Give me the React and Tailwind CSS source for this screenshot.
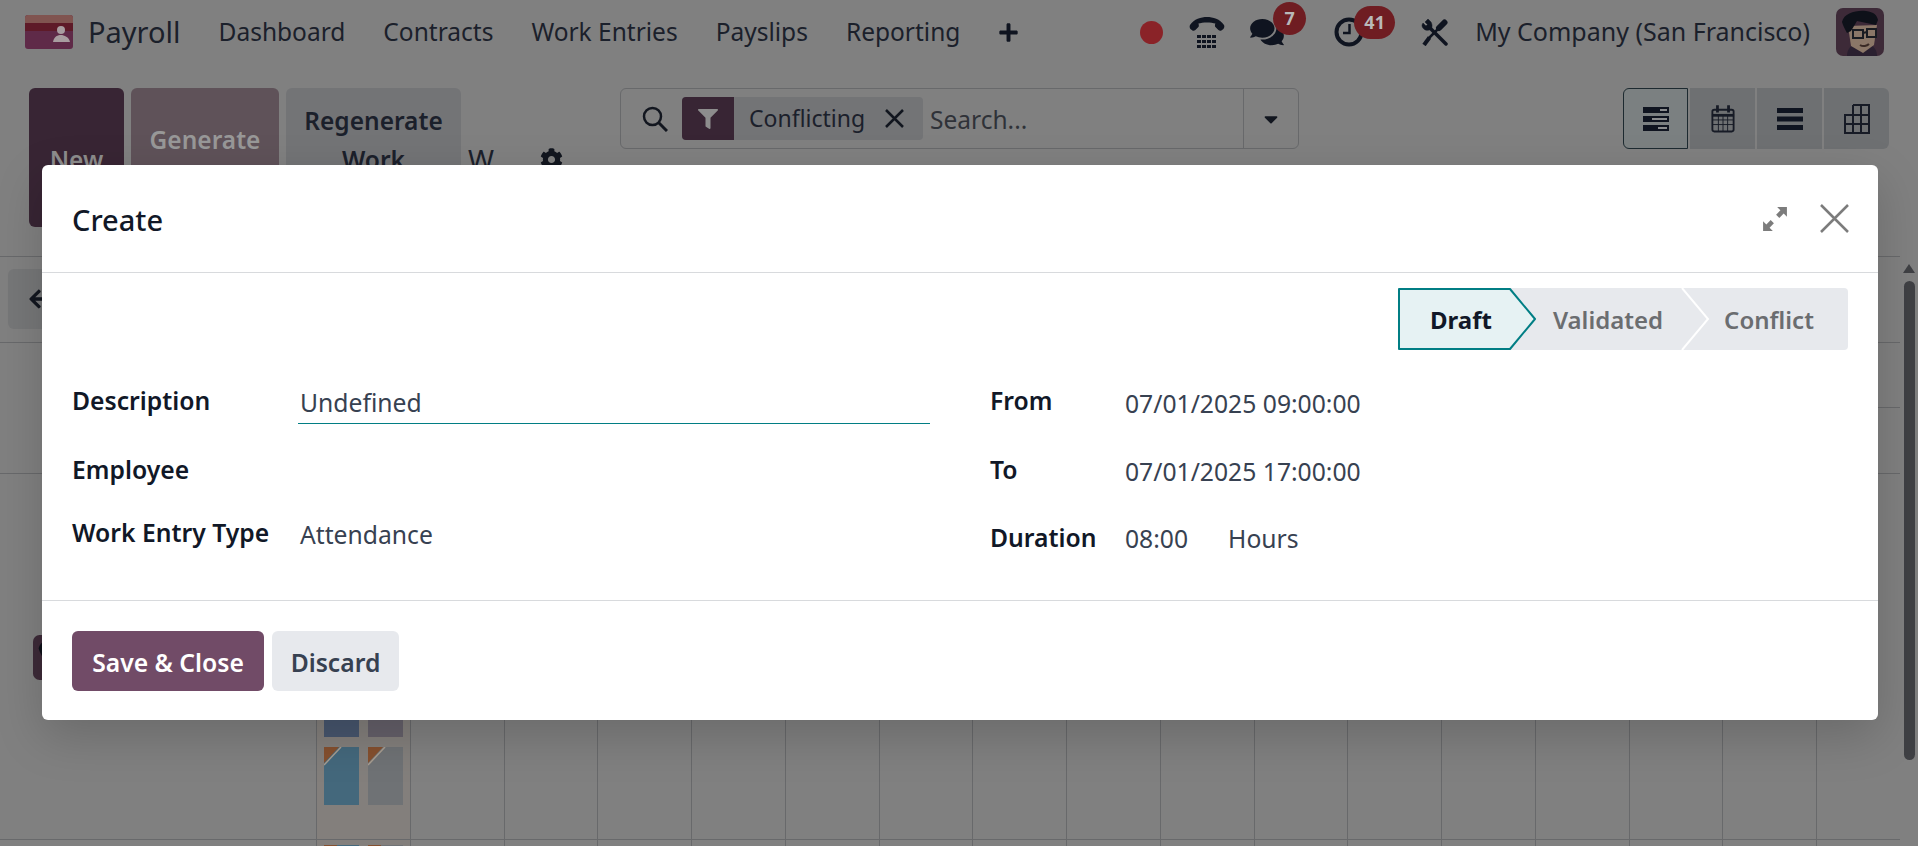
import { FaComments, FaFilter, FaCog, FaArrowLeft, FaCaretDown, FaPlus } from 'react-icons/fa';

const font = { fontFamily: '"Noto Sans", sans-serif' };

function PayrollLogo() {
  return (
    <svg width="48" height="34" viewBox="0 0 48 34" className="shrink-0">
      <rect width="48" height="34" rx="3" fill="#5f2a48" />
      <path d="M0 3a3 3 0 0 1 3-3h42a3 3 0 0 1 3 3v6H0z" fill="#805450" />
      <rect y="8" width="48" height="8" fill="#5e1a28" />
      <circle cx="36" cy="15" r="4" fill="#a89da0" />
      <path d="M28 27c1-6 5-7 8-7s8 2 9 7z" fill="#a89da0" />
    </svg>
  );
}

function Avatar({ size = 48 }) {
  return (
    <svg width={size} height={size} viewBox="0 0 48 48">
      <rect width="48" height="48" rx="7" fill="#3d2a38" />
      <path d="M11 48c0-6 3-10 7-11h16c5 2 7 6 7 11z" fill="#2a2030" />
      <path d="M12 18l3 20 12 7 11-8 3-20z" fill="#8b7768" />
      <path d="M6 14C8 5 20 2 30 3c8 1 11 4 12 9l-2 5-19-4-6 10-4 2C9 21 7 18 6 14z" fill="#0e1119" />
      <rect x="17" y="22" width="10" height="8" fill="none" stroke="#1a1c22" strokeWidth="2" />
      <rect x="31" y="21" width="9" height="8" fill="none" stroke="#1a1c22" strokeWidth="2" />
      <path d="M27 25l4-1" stroke="#1a1c22" strokeWidth="2" />
      <path d="M24 37c3 2 7 1 9-1" stroke="#3a2a25" strokeWidth="2" fill="none" />
    </svg>
  );
}

function VoipIcon() {
  return (
    <svg width="36" height="31" viewBox="0 0 36 31" fill="#0f1420">
      <path d="M1 8C5 2 12 0 18 0s13 2 17 8c.6 1 .4 3-.6 4l-2 1.500c-1 .6-2 .4-3-.4l-3-3c-.6-.6-.6-2 0-3.500-4-1.600-13-1.600-17 0 .6 1.500.6 2.900 0 3.500l-3 3c-1 .8-2 1-3 .4l-2-1.500C.6 11 .4 9 1 8z" />
      {[18, 23, 28].map((y) =>
        [8, 13, 18, 23].map((x) => <rect key={`${x}-${y}`} x={x} y={y} width="4" height="3" />)
      )}
    </svg>
  );
}

function ClockIcon() {
  return (
    <svg width="30" height="30" viewBox="0 0 30 30" fill="none" stroke="#0f1420">
      <circle cx="15" cy="15" r="12.500" strokeWidth="4" />
      <path d="M15.500 7v9H9" strokeWidth="2.500" />
    </svg>
  );
}

function ToolsIcon() {
  return (
    <svg width="27" height="27" viewBox="0 0 27 27" fill="none" stroke="#0f1420">
      <path d="M8 8l17 17" strokeWidth="3.500" strokeLinecap="round" />
      <path d="M1 6c0 4 4 6 7 5s4-4 2-8L7 0 4 3l2.500 2.500L5 7 2 4z" fill="#0f1420" strokeWidth="0.500" />
      <path d="M23.500 3.500L18 9" strokeWidth="6" strokeLinecap="round" />
      <path d="M18 9L8 19" strokeWidth="2.500" />
      <path d="M8.500 18.500L3 26" strokeWidth="4" />
    </svg>
  );
}

function SearchIcon() {
  return (
    <svg width="26" height="26" viewBox="0 0 26 26" fill="none" stroke="#12161f" strokeWidth="2.500">
      <circle cx="10.500" cy="10.500" r="8.500" />
      <path d="M17 17l8 8" strokeWidth="3" />
    </svg>
  );
}

function GanttView() {
  return (
    <svg width="28" height="24" viewBox="0 0 28 24" fill="#0f1420">
      <path d="M1 0h26v6H1zM1 9h26v6H1zM1 18h26v6H1z" />
      <path d="M18 2h7v2h-7zM10 11h15v2H10zM16 20h9v2h-9z" fill="#8a8c8e" />
    </svg>
  );
}

function CalendarView() {
  return (
    <svg width="24" height="30" viewBox="0 0 26 30" fill="none" stroke="#171b26">
      <rect x="1.500" y="5" width="23" height="23.500" rx="2" strokeWidth="2" />
      <path d="M1 11h24" strokeWidth="3" />
      <path d="M7 0v8M19 0v8" strokeWidth="3" />
      <path d="M1.500 16h23M1.500 21h23M8 11v17M13 11v17M18 11v17" strokeWidth="1" />
    </svg>
  );
}

function ListView() {
  return (
    <svg width="26" height="24" viewBox="0 0 26 24" fill="#0f1420">
      <path d="M0 1h26v5H0zM0 9.500h26v5H0zM0 18h26v5H0z" />
    </svg>
  );
}

function PivotView() {
  return (
    <svg width="26" height="30" viewBox="0 0 26 30" fill="none" stroke="#171b26" strokeWidth="2">
      <path d="M9 1h16v28H1V11h24M9 1v28M17 1v28M1 20h24" />
    </svg>
  );
}

function GanttPill({ color, flagged }) {
  return (
    <div className="relative h-full w-[38px] overflow-hidden" style={{ background: color }}>
      {flagged && (
        <svg width="20" height="20" viewBox="0 0 20 20" className="absolute left-0 top-0">
          <polygon points="0,0 15,0 0,16" fill="#85502f" />
          <path d="M17 0L0 18" stroke="#a89d90" strokeWidth="1.500" />
        </svg>
      )}
    </div>
  );
}

function Navbar() {
  const menus = ['Dashboard', 'Contracts', 'Work Entries', 'Payslips', 'Reporting'];
  return (
    <header className="flex h-[64px] items-center text-[#1b202b]">
      <div className="ml-[25px] flex items-center">
        <PayrollLogo />
        <span className="ml-[15px] text-[29px]">Payroll</span>
      </div>
      <nav className="ml-[38px] flex items-center gap-[38px] text-[24.500px]">
        {menus.map((m) => (
          <span key={m}>{m}</span>
        ))}
      </nav>
      <FaPlus className="ml-[38px] h-[21px] w-[21px] text-[#0f1420]" />
      <div className="ml-auto flex items-center">
        <span className="h-[23px] w-[23px] rounded-full bg-[#8a2328]" />
        <span className="ml-[26px]"><VoipIcon /></span>
        <span className="relative ml-[25px]">
          <FaComments className="h-[30px] w-[34px] text-[#0f1420]" />
          <span className="absolute -right-[22px] -top-[15px] flex h-[33px] w-[33px] items-center justify-center rounded-full bg-[#6f1d22] text-[18px] font-bold text-[#b9b9b9]">7</span>
        </span>
        <span className="relative ml-[50px]">
          <ClockIcon />
          <span className="absolute -right-[31px] -top-[11px] flex h-[33px] w-[41px] items-center justify-center rounded-full bg-[#6f1d22] text-[18px] font-bold text-[#b9b9b9]">41</span>
        </span>
        <span className="ml-[57px]"><ToolsIcon /></span>
        <span className="ml-[27px] text-[25px]">My Company (San Francisco)</span>
        <span className="ml-[26px] mr-[16px]"><Avatar /></span>
      </div>
    </header>
  );
}

function ControlPanel() {
  return (
    <section className="flex h-[193px] items-start border-b border-[#68696b] pt-[24px] text-[#1b202b]">
      <div className="ml-[29px] flex items-start gap-[7px] text-[24.500px] font-semibold">
        <button className="flex h-[139px] w-[95px] items-start justify-center rounded-[6px] bg-[#382534] pt-[54px] text-[#8d8d8d]">New</button>
        <button className="flex h-[139px] w-[148px] items-start justify-center rounded-[6px] bg-[#5f5259] pt-[34px] text-[#989898]">Generate</button>
        <button className="flex h-[139px] w-[175px] items-start justify-center rounded-[6px] bg-[#737476] pt-[13px] leading-[39px]">Regenerate<br />Work</button>
      </div>
      <span className="ml-[7px] mt-[51px] text-[28px] leading-[40px]">W</span>
      <FaCog className="ml-[46px] mt-[60px] h-[23px] w-[23px] text-[#12161f]" />
      <div className="ml-[57px] flex h-[61px] w-[679px] items-center rounded-[6px] border border-[#68696b]">
        <span className="ml-[21px]"><SearchIcon /></span>
        <div className="ml-[14px] flex h-[43px] w-[241px] items-center rounded-[4px] bg-[#737476]">
          <span className="flex h-full w-[52px] items-center justify-center rounded-l-[4px] bg-[#382534]">
            <FaFilter className="h-[20px] w-[20px] text-[#8d8d8d]" />
          </span>
          <span className="ml-[15px] text-[23px]">Conflicting</span>
          <svg width="19" height="19" viewBox="0 0 19 19" stroke="#12161f" strokeWidth="2.500" className="ml-[20px]">
            <path d="M1 1l17 17M18 1L1 18" />
          </svg>
        </div>
        <span className="ml-[7px] mt-[3px] text-[24.500px] text-[#2f3238]">Search...</span>
        <div className="ml-auto flex h-full w-[55px] items-center justify-center border-l border-[#68696b]">
          <FaCaretDown className="h-[22px] w-[22px] text-[#12161f]" />
        </div>
      </div>
      <div className="ml-[324px] flex h-[61px] gap-[2px]">
        <span className="flex w-[65px] items-center justify-center rounded-l-[6px] border border-[#1d2a30] bg-[#7b8081]"><GanttView /></span>
        <span className="flex w-[65px] items-center justify-center bg-[#6e7072]"><CalendarView /></span>
        <span className="flex w-[65px] items-center justify-center bg-[#6e7072]"><ListView /></span>
        <span className="flex w-[65px] items-center justify-center rounded-r-[6px] bg-[#6e7072]"><PivotView /></span>
      </div>
    </section>
  );
}

function GanttArea() {
  const cols = Array.from({ length: 16 });
  return (
    <section className="flex flex-col">
      <div className="flex h-[86px] items-start border-b border-[#68696b] pt-[12px]">
        <span className="ml-[8px] flex h-[60px] w-[80px] items-center rounded-[6px] bg-[#767778] pl-[20px]">
          <FaArrowLeft className="h-[22px] w-[22px] text-[#12161f]" />
        </span>
      </div>
      <div className="flex h-[131px] justify-end border-b border-[#68696b]">
        <div className="h-[65px] w-[22px] border-b border-[#68696b]" />
      </div>
      <div className="grid h-[366px] grid-cols-[316px_repeat(16,93.75px)_84px] border-b border-[#68696b]">
        <div className="pl-[33px] pt-[161px]">
          <Avatar size={45} />
        </div>
        {cols.map((_, i) => (
          <div key={i} className="flex flex-col justify-end border-l border-[#68696b]">
            {i === 0 && (
              <div className="flex h-full flex-col justify-end gap-[10px] bg-[#837f7c] px-[7px] pb-[34px]">
                <div className="flex h-[60px] gap-[9px]">
                  <GanttPill color="#47566e" />
                  <GanttPill color="#65606a" />
                </div>
                <div className="flex h-[58px] gap-[9px]">
                  <GanttPill color="#44687c" flagged />
                  <GanttPill color="#6f7275" flagged />
                </div>
              </div>
            )}
          </div>
        ))}
        <div className="border-l border-[#68696b]" />
      </div>
      <div className="grid h-[6px] grid-cols-[316px_repeat(16,93.75px)_84px] overflow-hidden">
        <div />
        {cols.map((_, i) => (
          <div key={i} className="border-l border-[#68696b]">
            {i === 0 && (
              <div className="flex h-full gap-[9px] bg-[#837f7c] px-[7px] pt-[5px]">
                <div className="h-[8px] w-[38px] bg-[#44687c]"><div className="h-full w-[13px] bg-[#85502f]" /></div>
                <div className="h-[8px] w-[38px] bg-[#6f7275]"><div className="h-full w-[13px] bg-[#85502f]" /></div>
              </div>
            )}
          </div>
        ))}
        <div className="border-l border-[#68696b]" />
      </div>
    </section>
  );
}

function Scrollbar() {
  return (
    <div className="flex w-[18px] flex-col items-center">
      <div className="mt-[264px] h-0 w-0 border-x-[6px] border-b-[9px] border-x-transparent border-b-[#3f4044]" />
      <div className="mt-[8px] h-[479px] w-[11px] rounded-full bg-[#3f4044]" />
    </div>
  );
}

function StatusBar() {
  return (
    <div className="relative flex h-[62px] w-[450px] rounded-[4px] bg-[#e7e9ed] text-[24px] font-semibold text-[#6b6d70]">
      <svg width="139" height="62" viewBox="0 0 139 62" className="absolute left-0 top-0">
        <polygon points="1,1 112,1 137,31 112,61 1,61" fill="#e6f2f3" stroke="#017e84" strokeWidth="2" strokeLinejoin="round" />
      </svg>
      <svg width="30" height="62" viewBox="0 0 30 62" className="absolute left-[283px] top-0">
        <path d="M1 0l26 31L1 62" fill="none" stroke="#ffffff" strokeWidth="2" />
      </svg>
      <span className="relative ml-[32px] mt-[2px] self-center font-bold text-[#111827]">Draft</span>
      <span className="relative ml-[61px] mt-[2px] self-center">Validated</span>
      <span className="relative ml-[61px] mt-[2px] self-center">Conflict</span>
    </div>
  );
}

function Field({ label, width, children, className = '' }) {
  return (
    <div className={`flex h-[40px] items-center ${className}`}>
      <label className="font-semibold text-[#111827]" style={{ width }}>{label}</label>
      {children}
    </div>
  );
}

function CreateDialog() {
  return (
    <div className="absolute left-[42px] top-[165px] flex h-[555px] w-[1836px] flex-col rounded-[6px] bg-white text-[24.700px] text-[#374151] shadow-[0_16px_48px_rgba(0,0,0,0.175)]">
      <div className="flex h-[108px] shrink-0 items-center border-b border-[#d8dadd] pl-[30px] pr-[29px]">
        <h2 className="mt-[2px] text-[29px] font-medium text-[#111827]">Create</h2>
        <svg width="26" height="26" viewBox="0 0 24 24" fill="#7c7c7c" className="ml-auto">
          <path d="M14 1h9v9l-3-3-4 4-3-3 4-4zM10 23H1v-9l3 3 4-4 3 3-4 4z" />
        </svg>
        <svg width="29" height="29" viewBox="0 0 29 29" stroke="#7c7c7c" strokeWidth="2.500" className="ml-[32px]">
          <path d="M1 1l27 27M28 1L1 28" />
        </svg>
      </div>
      <div className="flex-1 px-[30px] pt-[15px]">
        <div className="flex justify-end"><StatusBar /></div>
        <div className="mt-[31px] grid grid-cols-[918px_1fr]">
          <div className="flex flex-col">
            <Field label="Description" width={228}>
              <span className="-ml-[2px] flex h-[46px] w-[632px] items-center border-b border-[#017e84] pl-[2px] pt-[5px]">Undefined</span>
            </Field>
            <Field label="Employee" width={228} className="mt-[29px]" />
            <Field label="Work Entry Type" width={228} className="mt-[23px]">
              <span className="mt-[4px]">Attendance</span>
            </Field>
          </div>
          <div className="flex flex-col">
            <Field label="From" width={135}><span className="mt-[5px]">07/01/2025 09:00:00</span></Field>
            <Field label="To" width={135} className="mt-[29px]"><span className="mt-[3px]">07/01/2025 17:00:00</span></Field>
            <Field label="Duration" width={135} className="mt-[28px]">
              <span className="mt-[2px]">08:00</span>
              <span className="ml-[40px] mt-[2px]">Hours</span>
            </Field>
          </div>
        </div>
      </div>
      <div className="flex h-[120px] shrink-0 items-center gap-[8px] border-t border-[#d8dadd] pl-[30px]">
        <button className="h-[60px] w-[192px] rounded-[6px] bg-[#714b67] pt-[4px] font-semibold text-white">Save &amp; Close</button>
        <button className="h-[60px] w-[127px] rounded-[6px] bg-[#e7e9ed] pt-[4px] font-semibold text-[#374151]">Discard</button>
      </div>
    </div>
  );
}

function App() {
  return (
    <div className="relative flex h-[846px] w-[1918px] overflow-hidden bg-[#808080]" style={font}>
      <div className="w-[1900px]">
        <Navbar />
        <ControlPanel />
        <GanttArea />
      </div>
      <Scrollbar />
      <CreateDialog />
    </div>
  );
}

export default App;
